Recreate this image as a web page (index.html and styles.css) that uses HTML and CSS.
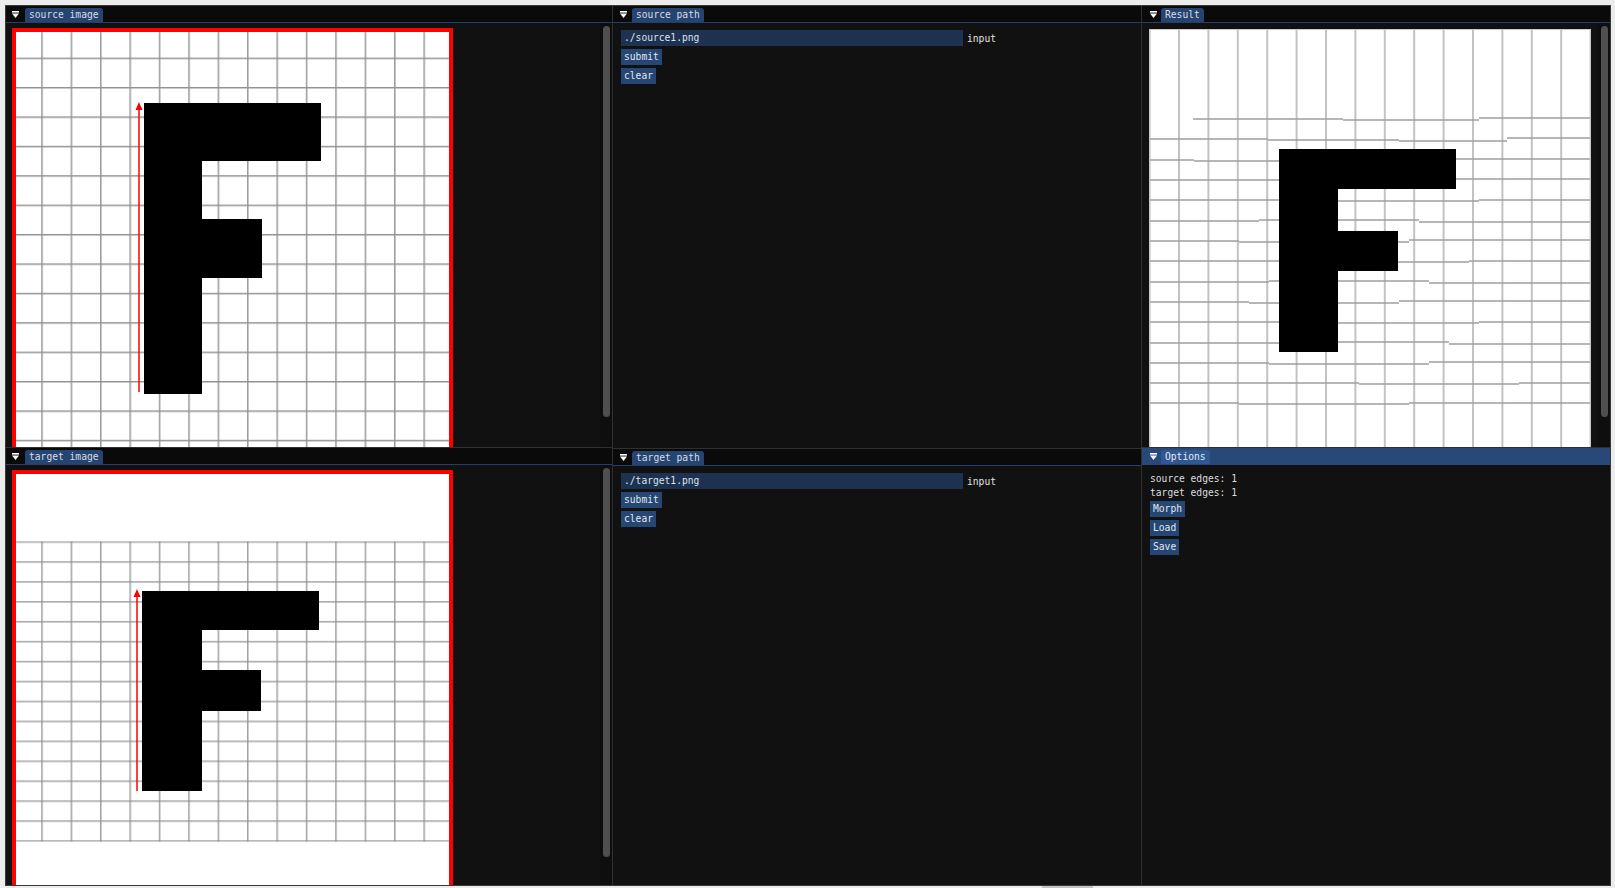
FILE: index.html
```html
<!DOCTYPE html>
<html>
<head>
<meta charset="utf-8">
<link rel="stylesheet" href="styles.css">
</head>
<body>
<div class="app">
  <div class="col col1">
    <section class="panel top">
      <header class="titlebar">
        <svg class="menu-ico" width="7" height="7" viewBox="0 0 7 7"><rect x="0" y="0" width="7" height="1.6" fill="#fff"/><path d="M0 2.6H7L3.5 7Z" fill="#fff"/></svg>
        <span class="tab">source image</span>
      </header>
      <div class="body">
        <div class="content img-pad">
          <svg class="pic" width="441" height="441" viewBox="0 0 441 441">
            <defs>
              <pattern id="g1" x="-0.2" y="0.2" width="29.4" height="29.4" patternUnits="userSpaceOnUse">
                <path d="M0.8 0V29.4M0 0.8H29.4" fill="none" stroke="#929292" stroke-width="1.4"/>
              </pattern>
            </defs>
            <rect width="441" height="441" fill="#fff"/>
            <rect width="441" height="441" fill="url(#g1)"/>
            <path d="M132 75H309V133H190V191H250V250H190V366H132Z" fill="#000"/>
            <path d="M127 364V81" stroke="#f00" stroke-width="1.5"/>
            <path d="M127 74L123.5 82H130.5Z" fill="#f00"/>
            <rect x="2" y="2" width="437" height="437" fill="none" stroke="#f00" stroke-width="4"/>
          </svg>
        </div>
        <div class="vscroll"><div class="grab g-top"></div></div>
      </div>
    </section>
    <section class="panel bottom">
      <header class="titlebar">
        <svg class="menu-ico" width="7" height="7" viewBox="0 0 7 7"><rect x="0" y="0" width="7" height="1.6" fill="#fff"/><path d="M0 2.6H7L3.5 7Z" fill="#fff"/></svg>
        <span class="tab">target image</span>
      </header>
      <div class="body">
        <div class="content img-pad">
          <svg class="pic" width="441" height="441" viewBox="0 0 441 441">
            <defs>
              <pattern id="g2" x="-0.2" y="71.2" width="29.4" height="19.93" patternUnits="userSpaceOnUse">
                <path d="M0.8 0V19.93M0 0.8H29.4" fill="none" stroke="#929292" stroke-width="1.3"/>
              </pattern>
            </defs>
            <rect width="441" height="441" fill="#fff"/>
            <rect y="71.2" width="441" height="300.6" fill="url(#g2)"/>
            <path d="M130 121H307V160H190V200H249V241H190V321H130Z" fill="#000"/>
            <path d="M125 321V126" stroke="#f00" stroke-width="1.5"/>
            <path d="M125 119L121.5 127H128.5Z" fill="#f00"/>
            <rect x="2" y="2" width="437" height="437" fill="none" stroke="#f00" stroke-width="4"/>
          </svg>
        </div>
        <div class="vscroll"><div class="grab g-bottom"></div></div>
      </div>
    </section>
  </div>

  <div class="col col2">
    <section class="panel top">
      <header class="titlebar">
        <svg class="menu-ico" width="7" height="7" viewBox="0 0 7 7"><rect x="0" y="0" width="7" height="1.6" fill="#fff"/><path d="M0 2.6H7L3.5 7Z" fill="#fff"/></svg>
        <span class="tab">source path</span>
      </header>
      <div class="body form">
        <div class="field-row">
          <div class="input">./source1.png</div>
          <span class="label">input</span>
        </div>
        <div class="btn">submit</div>
        <div class="btn">clear</div>
      </div>
    </section>
    <section class="panel bottom">
      <header class="titlebar">
        <svg class="menu-ico" width="7" height="7" viewBox="0 0 7 7"><rect x="0" y="0" width="7" height="1.6" fill="#fff"/><path d="M0 2.6H7L3.5 7Z" fill="#fff"/></svg>
        <span class="tab">target path</span>
      </header>
      <div class="body form">
        <div class="field-row">
          <div class="input">./target1.png</div>
          <span class="label">input</span>
        </div>
        <div class="btn">submit</div>
        <div class="btn">clear</div>
      </div>
    </section>
  </div>

  <div class="col col3">
    <section class="panel top">
      <header class="titlebar">
        <svg class="menu-ico" width="7" height="7" viewBox="0 0 7 7"><rect x="0" y="0" width="7" height="1.6" fill="#fff"/><path d="M0 2.6H7L3.5 7Z" fill="#fff"/></svg>
        <span class="tab">Result</span>
      </header>
      <div class="body">
        <div class="content res-pad">
          <svg class="pic" width="442" height="441" viewBox="0 0 442 441">
            <defs>
              <pattern id="g3" x="-0.4" y="0" width="29.4" height="441" patternUnits="userSpaceOnUse">
                <path d="M1 0V441" fill="none" stroke="#c2c2c2" stroke-width="2"/>
              </pattern>
            </defs>
            <rect width="442" height="441" fill="#fff"/>
            <rect width="442" height="441" fill="url(#g3)"/>
            <path fill="none" stroke="#9e9e9e" stroke-width="1.3" d="
              M44 90H194M194 91H330M330 89H442
              M0 110H119M119 111H250M250 112H358M358 109H442
              M0 131H45M45 132H224M224 130H442
              M0 151H130M130 152H300M300 150H442
              M0 171H160M160 172H330M330 171H442
              M0 192H110M110 191H270M270 193H442
              M0 212H90M90 213H260M260 211H442
              M0 232H140M140 233H320M320 232H442
              M0 253H120M120 252H280M280 254H442
              M0 273H100M100 274H250M250 272H442
              M0 293H180M180 294H330M330 293H442
              M0 314H150M150 313H300M300 315H442
              M0 334H120M120 335H280M280 333H442
              M0 354H210M210 355H370M370 354H442
              M0 374H90M90 375H260M260 374H442"/>
            <path d="M130 120H307V160H189V202H249V242H189V323H130Z" fill="#000"/>
            <rect x="0.5" y="0.5" width="441" height="440" fill="none" stroke="#c8c8c8" stroke-width="1"/>
          </svg>
        </div>
        <div class="vscroll"><div class="grab g-top"></div></div>
      </div>
    </section>
    <section class="panel bottom focused">
      <header class="titlebar">
        <svg class="menu-ico" width="7" height="7" viewBox="0 0 7 7"><rect x="0" y="0" width="7" height="1.6" fill="#fff"/><path d="M0 2.6H7L3.5 7Z" fill="#fff"/></svg>
        <span class="tab">Options</span>
      </header>
      <div class="body options">
        <div class="line">source edges: 1</div>
        <div class="line">target edges: 1</div>
        <div class="btn first">Morph</div>
        <div class="btn">Load</div>
        <div class="btn">Save</div>
      </div>
    </section>
  </div>
  <div class="grip"></div>
</div>
</body>
</html>
```
FILE: styles.css
```css
* { box-sizing: border-box; }
html, body { margin: 0; padding: 0; }
body {
  width: 1615px;
  height: 888px;
  background: #ececec;
  overflow: hidden;
  font-family: "DejaVu Sans Mono", "Liberation Mono", monospace;
  font-size: 9.65px;
  color: #e2e2e2;
}
.app {
  position: relative;
  margin: 5px 4px 0 5px;
  width: 1606px;
  height: 881px;
  border: 1px solid #3a3a3a;
  background: #303030;
  display: flex;
  gap: 1px;
}
.col { display: flex; flex-direction: column; gap: 1px; }
.col1 { width: 606px; }
.col2 { width: 528px; }
.col3 { flex: 1; }
.col1 .top, .col3 .top { height: 441px; }
.col2 .top { height: 442px; }
.panel { display: flex; flex-direction: column; min-height: 0; }
.panel.bottom { flex: 1; }
.titlebar {
  height: 17px;
  flex: none;
  background: #0a0a0a;
  border-bottom: 1px solid #24406a;
  display: flex;
  align-items: flex-end;
  padding-left: 6px;
}
.col2 .titlebar { padding-left: 7px; }
.col3 .titlebar { padding-left: 8px; }
.menu-ico { align-self: center; margin-top: 1px; margin-right: 6px; flex: none; }
.col2 .menu-ico { margin-right: 5px; }
.col3 .menu-ico { margin-right: 4px; }
.tab {
  height: 14px;
  line-height: 14px;
  padding: 0 4px;
  background: #264470;
  color: #d6dce6;
  border-radius: 3px 3px 0 0;
  white-space: nowrap;
}
.focused .titlebar { background: #284878; border-bottom-color: #284878; }
.focused .tab { background: #2e5793; color: #e4e9f0; }
.body {
  flex: 1;
  min-height: 0;
  background: #111111;
  display: flex;
  overflow: hidden;
}
.content { flex: 1; min-width: 0; overflow: hidden; }
.img-pad { padding: 5px 0 0 6px; }
.res-pad { padding: 6px 0 0 7px; }
.pic { display: block; }
.vscroll { width: 12px; flex: none; background: #0e0e0e; }
.grab {
  width: 7px;
  margin: 3px 0 0 3px;
  background: #4f4f4f;
  border-radius: 4px;
}
.g-top { height: 391px; }
.g-bottom { height: 389px; }
.form {
  flex-direction: column;
  align-items: flex-start;
  padding: 7px 8px;
}
.field-row { display: flex; align-items: center; height: 16px; }
.input {
  width: 342px;
  height: 16px;
  line-height: 16px;
  padding: 0 3px;
  background: #1d3150;
  color: #dde2ea;
}
.label { margin-left: 4px; color: #e2e2e2; }
.btn {
  height: 16px;
  line-height: 16px;
  padding: 0 3px;
  background: #264673;
  color: #e2e7ee;
  margin-top: 3px;
  white-space: nowrap;
}
.options {
  flex-direction: column;
  align-items: flex-start;
  padding: 7px 8px;
}
.line { height: 14px; line-height: 14px; color: #dcdcdc; }
.options .btn.first { margin-top: 1px; }
.grip {
  position: absolute;
  left: 1036px;
  bottom: -3px;
  width: 51px;
  height: 2px;
  background: #c4c4c4;
}
```
